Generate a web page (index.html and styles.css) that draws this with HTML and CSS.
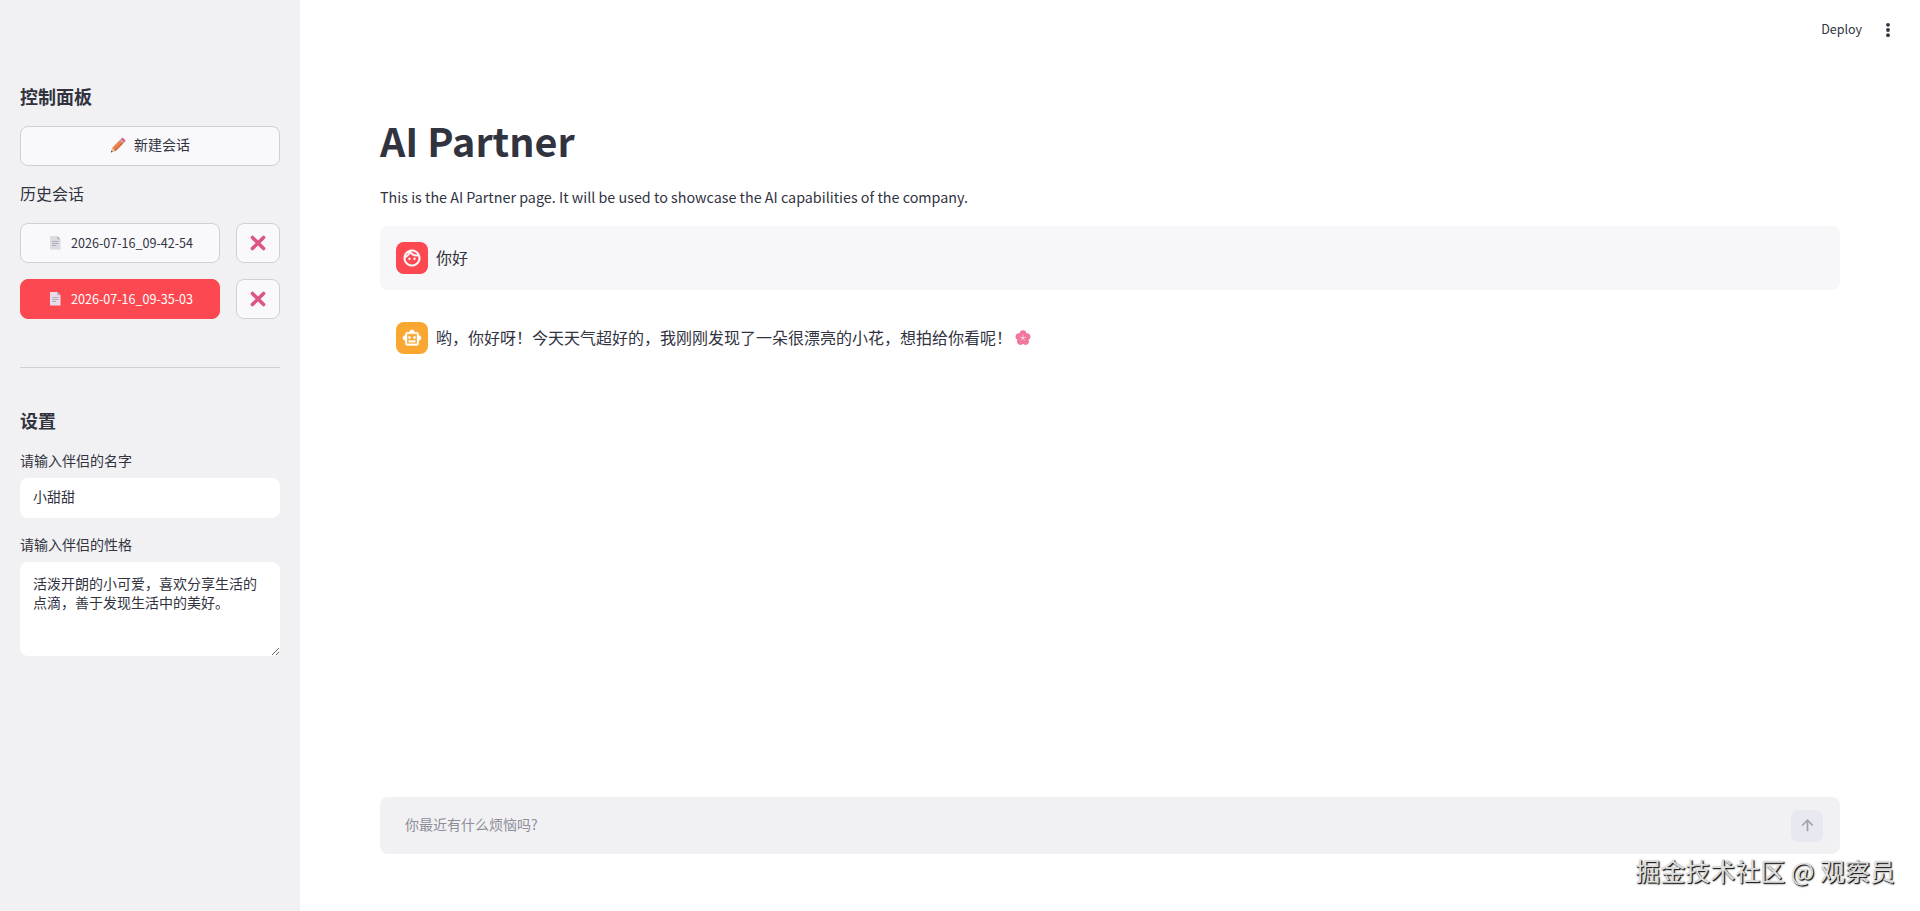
FILE: index.html
```html
<!DOCTYPE html>
<html lang="zh-CN">
  <head>
    <meta charset="UTF-8" />
    <meta name="viewport" content="width=device-width, initial-scale=1.0" />
    <title>AI Partner</title>
    <link rel="stylesheet" href="styles.css">
  </head>
  <body>
    <svg class="sprite" aria-hidden="true">
      <symbol id="icon-page" viewBox="0 0 16 16">
        <path d="M3 2h7.2l3.3 3.3V15.5H3z" fill="currentColor" />
        <path d="M10.2 2v3.3h3.3z" fill="#b3b0bb" />
        <path d="M5 7.5h6.5M5 9.5h6.5M5 11.5h4.2" stroke="#a9a7b2" stroke-width="0.9" fill="none" />
      </symbol>
      <symbol id="icon-cross" viewBox="0 0 16 16">
        <path d="M2.4 2.4 13.6 13.6M13.6 2.4 2.4 13.6" stroke="#dd5588" stroke-width="3.5" stroke-linecap="round" />
      </symbol>
    </svg>

    <div class="app">
      <aside class="sidebar">
        <h3 class="sidebar-title">控制面板</h3>
        <button class="btn btn-new">
          <svg class="emoji" viewBox="0 0 16 16">
            <path d="M.9 15.4 2 10.9 5.4 14.2z" fill="#e9c7a0" />
            <path d="M.9 15.4 1.4 13.4 2.8 14.8z" fill="#3c3c42" />
            <path d="M2 10.9 9.8 3.1 13.2 6.5 5.4 14.2z" fill="#ee8350" />
            <path d="M4.3 13.1 12.1 5.4 13.2 6.5 5.4 14.2z" fill="#d06a40" />
            <path d="M9.8 3.1 10.9 2 14.3 5.4 13.2 6.5z" fill="#a8a4ae" />
            <path d="M10.9 2 11.8 1.1Q12.6.5 13.3 1.2L15.1 3Q15.7 3.8 15.2 4.5L14.3 5.4z" fill="#df5f79" />
          </svg>
          <span>新建会话</span>
        </button>
        <p class="history-label">历史会话</p>
        <div class="session-list">
          <div class="session">
            <button class="btn btn-session">
              <svg class="emoji page"><use href="#icon-page" /></svg>
              <span>2026-07-16_09-42-54</span>
            </button>
            <button class="btn btn-delete"><svg class="emoji"><use href="#icon-cross" /></svg></button>
          </div>
          <div class="session">
            <button class="btn btn-session active">
              <svg class="emoji page"><use href="#icon-page" /></svg>
              <span>2026-07-16_09-35-03</span>
            </button>
            <button class="btn btn-delete"><svg class="emoji"><use href="#icon-cross" /></svg></button>
          </div>
        </div>
        <hr class="divider" />
        <h3 class="sidebar-title">设置</h3>
        <label class="field-label" for="nick-name">请输入伴侣的名字</label>
        <input id="nick-name" class="field" type="text" value="小甜甜" />
        <label class="field-label" for="nature">请输入伴侣的性格</label>
        <textarea id="nature" class="field field-area">活泼开朗的小可爱，喜欢分享生活的点滴，善于发现生活中的美好。</textarea>
      </aside>

      <main class="main">
        <header class="toolbar">
          <span class="deploy">Deploy</span>
          <svg class="menu" viewBox="0 0 20 20">
            <circle cx="10" cy="4.8" r="1.9" />
            <circle cx="10" cy="10" r="1.9" />
            <circle cx="10" cy="15.2" r="1.9" />
          </svg>
        </header>

        <section class="content">
          <h1 class="title">AI Partner</h1>
          <p class="intro">This is the AI Partner page. It will be used to showcase the AI capabilities of the company.</p>

          <div class="message message-user">
            <div class="avatar avatar-user">
              <svg viewBox="0 0 24 24">
                <path d="M10.25 13c0 .69-.56 1.25-1.25 1.25S7.75 13.69 7.75 13s.56-1.25 1.25-1.25 1.25.56 1.25 1.25zM15 11.75c-.69 0-1.25.56-1.25 1.25s.56 1.25 1.25 1.25 1.25-.56 1.25-1.25-.56-1.25-1.25-1.25zm7 .25c0 5.52-4.48 10-10 10S2 17.52 2 12 6.48 2 12 2s10 4.48 10 10zM10.66 4.12C12.06 6.44 14.6 8 17.5 8c.46 0 .91-.05 1.34-.12C17.44 5.56 14.9 4 12 4c-.46 0-.91.05-1.34.12zM4.42 9.47c1.71-.97 3.03-2.55 3.66-4.44C6.37 6 5.05 7.58 4.42 9.47zM20 12c0-.78-.12-1.53-.33-2.24-.7.15-1.42.24-2.17.24-3.13 0-5.92-1.44-7.76-3.69C8.69 8.87 6.6 10.88 4 11.86c.01.04 0 .09 0 .14 0 4.42 3.58 8 8 8s8-3.58 8-8z" />
              </svg>
            </div>
            <p>你好</p>
          </div>

          <div class="message">
            <div class="avatar avatar-bot">
              <svg viewBox="0 0 24 24">
                <path d="M20 9V7c0-1.1-.9-2-2-2h-3c0-1.66-1.34-3-3-3S9 3.34 9 5H6c-1.1 0-2 .9-2 2v2c-1.66 0-3 1.34-3 3s1.34 3 3 3v4c0 1.1.9 2 2 2h12c1.1 0 2-.9 2-2v-4c1.66 0 3-1.34 3-3s-1.34-3-3-3zm-2 10H6V7h12v12zm-9-6c-.83 0-1.5-.67-1.5-1.5S8.17 10 9 10s1.5.67 1.5 1.5S9.83 13 9 13zm7.5-1.5c0 .83-.67 1.5-1.5 1.5s-1.5-.67-1.5-1.5.67-1.5 1.5-1.5 1.5.67 1.5 1.5zM8 15h8v2H8v-2z" />
              </svg>
            </div>
            <p>哟，你好呀！今天天气超好的，我刚刚发现了一朵很漂亮的小花，想拍给你看呢！</p>
            <svg class="flower" viewBox="0 0 16 16">
              <g fill="#f0769c">
                <ellipse cx="8" cy="4" rx="3.4" ry="3.7" />
                <ellipse cx="8" cy="4" rx="3.4" ry="3.7" transform="rotate(72 8 8)" />
                <ellipse cx="8" cy="4" rx="3.4" ry="3.7" transform="rotate(144 8 8)" />
                <ellipse cx="8" cy="4" rx="3.4" ry="3.7" transform="rotate(216 8 8)" />
                <ellipse cx="8" cy="4" rx="3.4" ry="3.7" transform="rotate(288 8 8)" />
              </g>
              <path d="M8 8V4.8M8 8l3-1M8 8l1.9 2.6M8 8l-1.9 2.6M8 8 5 7" stroke="#fbd3df" stroke-width="0.8" fill="none" />
              <circle cx="8" cy="8" r="0.9" fill="#fbd3df" />
            </svg>
          </div>
        </section>

        <footer class="chat-bar">
          <div class="chat-input">
            <input class="chat-text" type="text" placeholder="你最近有什么烦恼吗?" />
            <button class="send">
              <svg viewBox="0 0 16 16">
                <path d="M8 14V2.6M2.4 8 8 2.4 13.6 8" />
              </svg>
            </button>
          </div>
        </footer>
      </main>
    </div>

    <div class="watermark">掘金技术社区 @ 观察员</div>
  </body>
</html>
```
FILE: styles.css
```css
* {
  margin: 0;
  padding: 0;
  box-sizing: border-box;
}

body {
  font-family: "Noto Sans CJK SC", "Noto Sans", sans-serif;
  font-size: 16px;
  color: #31333f;
  background: #fff;
  overflow: hidden;
}

button,
input,
textarea {
  font-family: inherit;
  color: inherit;
}

.sprite {
  display: none;
}

.app {
  display: flex;
  height: 100vh;
}

/* Sidebar */
.sidebar {
  display: flex;
  flex-direction: column;
  width: 300px;
  padding: 82px 20px 0;
  background: #f1f1f3;
  flex-shrink: 0;
}

.sidebar-title {
  height: 28px;
  line-height: 28px;
  font-size: 18px;
  font-weight: 700;
}

.btn {
  display: flex;
  align-items: center;
  justify-content: center;
  height: 40px;
  border: 1px solid #cfd0d5;
  border-radius: 8px;
  background: #f9f9fb;
  cursor: pointer;
}

.emoji {
  width: 16px;
  height: 16px;
  flex-shrink: 0;
}

.btn-new {
  gap: 8px;
  margin-top: 16px;
  padding-bottom: 2px;
  font-size: 14px;
}

.btn-new span {
  padding-bottom: 3px;
}

.history-label {
  margin-top: 15px;
  height: 24px;
  line-height: 24px;
}

.session-list {
  display: flex;
  flex-direction: column;
  gap: 16px;
  margin-top: 18px;
}

.session {
  display: flex;
  gap: 16px;
}

.btn-session {
  width: 200px;
  gap: 8px;
  padding-bottom: 2px;
  font-size: 12.55px;
}

.page {
  color: #dcdce2;
}

.btn-session.active {
  background: #fc4850;
  border-color: #fc4850;
  color: #fff;
}

.active .page {
  color: #e9dcec;
}

.btn-delete {
  width: 44px;
}

.divider {
  height: 1px;
  margin: 48px 0 38px;
  border: none;
  background: #cfd0d5;
}

.field-label {
  height: 20px;
  line-height: 20px;
  margin-top: 16px;
  margin-bottom: 8px;
  font-size: 14px;
}

.field {
  width: 100%;
  height: 40px;
  padding: 0 13px 4px;
  border: none;
  border-radius: 8px;
  background: #fff;
  font-size: 14px;
  outline: none;
}

.field-area {
  height: 94px;
  padding: 12px 13px;
  line-height: 19px;
  resize: vertical;
}

/* Main area */
.main {
  flex: 1;
  display: flex;
  flex-direction: column;
}

.toolbar {
  display: flex;
  align-items: center;
  justify-content: flex-end;
  gap: 16px;
  height: 60px;
  padding-right: 22px;
}

.deploy {
  padding-bottom: 3px;
  font-size: 12.5px;
}

.menu {
  width: 20px;
  height: 20px;
  fill: #31333f;
}

.content {
  flex: 1;
  padding: 51px 80px 0;
}

.title {
  height: 58px;
  line-height: 58px;
  font-size: 39.5px;
  font-weight: 700;
}

.intro {
  height: 24px;
  margin: 16px 0 17px;
  line-height: 24px;
  font-size: 14.33px;
}

.message {
  display: flex;
  align-items: center;
  height: 64px;
  padding: 16px;
  margin-bottom: 16px;
  border-radius: 8px;
}

.message p {
  padding-bottom: 2px;
}

.message-user {
  background: #f7f7f9;
}

.avatar {
  display: flex;
  align-items: center;
  justify-content: center;
  width: 32px;
  height: 32px;
  margin-right: 8px;
  border-radius: 8px;
}

.avatar svg {
  width: 20px;
  height: 20px;
  fill: #fff;
  stroke: #fff;
  stroke-width: 0.4;
}

.avatar-user {
  background: #fc4850;
}

.avatar-bot {
  background: #faa732;
}

.flower {
  width: 16px;
  height: 16px;
  margin-left: 3px;
}

.chat-bar {
  padding: 0 80px 57px;
}

.chat-input {
  display: flex;
  align-items: center;
  height: 57px;
  padding: 0 17px 0 25px;
  border-radius: 8px;
  background: #f1f1f4;
}

.chat-text {
  flex: 1;
  height: 40px;
  padding-bottom: 4px;
  border: none;
  background: none;
  font-size: 14px;
  outline: none;
}

.chat-text::placeholder {
  color: #8d8e97;
}

.send {
  display: flex;
  align-items: center;
  justify-content: center;
  width: 32px;
  height: 32px;
  border: none;
  border-radius: 8px;
  background: #e7e8f0;
}

.send svg {
  width: 15px;
  height: 15px;
  fill: none;
  stroke: #a0a1a9;
  stroke-width: 1.8;
}

.watermark {
  position: absolute;
  right: 25px;
  bottom: 23px;
  line-height: 36px;
  font-size: 25px;
  color: #dedede;
  text-shadow: 1px 1px 0 #222, 1px 1px 2px #333;
}
```
